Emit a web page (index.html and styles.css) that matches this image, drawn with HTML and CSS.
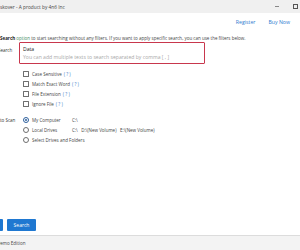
FILE: index.html
```html
<!DOCTYPE html>
<html>
<head>
<meta charset="utf-8">
<link rel="stylesheet" href="styles.css">
</head>
<body>
<div class="app">
  <div class="titlebar">
    <span class="title">skover - A product by 4n6 Inc</span>
    <div class="winctl">
      <span class="min"></span>
      <span class="max"></span>
    </div>
  </div>
  <div class="header">
    <a class="link">Register</a>
    <a class="link">Buy Now</a>
  </div>
  <div class="main">
    <p class="intro"><b>Search</b> <span class="opt">option</span> to start searching without any filters. If you want to apply specific search, you can use the filters below.</p>
    <div class="row search-row">
      <div class="label lbl-search">Search</div>
      <div class="inputbox">
        <div class="value">Data</div>
        <div class="placeholder">You can add multiple texts to search separated by comma [ , ]</div>
      </div>
    </div>
    <div class="options">
      <label class="opt-row"><span class="cb"></span><span>Case Sensitive</span><span class="help">( ? )</span></label>
      <label class="opt-row"><span class="cb"></span><span>Match Exact Word</span><span class="help">( ? )</span></label>
      <label class="opt-row"><span class="cb"></span><span>File Extension</span><span class="help">( ? )</span></label>
      <label class="opt-row"><span class="cb"></span><span>Ignore File</span><span class="help">( ? )</span></label>
    </div>
    <div class="row scan-row">
      <div class="label">to Scan</div>
      <div class="radios">
        <div class="radio-row"><span class="rb checked"></span><span class="rname">My Computer</span><span class="drives">C:\</span></div>
        <div class="radio-row"><span class="rb"></span><span class="rname">Local Drives</span><span class="drives">C:\ &nbsp; D:\(New Volume) &nbsp; E:\(New Volume)</span></div>
        <div class="radio-row"><span class="rb"></span><span class="rname">Select Drives and Folders</span></div>
      </div>
    </div>
  </div>
  <div class="actions">
    <button class="btn btn-back"></button>
    <button class="btn">Search</button>
  </div>
  <div class="footer"><span class="edition">Demo Edition</span></div>
</div>
</body>
</html>
```
FILE: styles.css
```css
html, body {
  margin: 0;
  padding: 0;
  width: 300px;
  height: 250px;
  overflow: hidden;
  background: #ffffff;
}
.app {
  width: 300px;
  height: 250px;
  display: flex;
  flex-direction: column;
  font-family: "Open Sans", "Noto Sans", sans-serif;
  font-size: 4.5px;
  line-height: 6px;
  color: #333333;
}
.titlebar {
  height: 13px;
  background: #f0f0f0;
  display: flex;
  align-items: center;
  justify-content: space-between;
  flex-shrink: 0;
}
.title {
  color: #444444;
  font-size: 4.8px;
}
.winctl {
  display: flex;
  align-items: center;
  gap: 14px;
  margin-right: 2px;
}
.min {
  width: 4px;
  height: 0;
  border-top: 1px solid #888888;
}
.max {
  width: 3px;
  height: 3px;
  border: 1px solid #555555;
}
.header {
  height: 17px;
  display: flex;
  align-items: center;
  justify-content: flex-end;
  gap: 13px;
  padding-right: 10px;
  flex-shrink: 0;
}
.link {
  color: #2f7bd0;
  font-size: 5.2px;
}
.main {
  flex: 1;
  display: flex;
  flex-direction: column;
}
.intro {
  margin: 5px 0 0 0;
  white-space: nowrap;
  color: #444444;
}
.intro b {
  color: #222222;
  font-weight: 700;
}
.opt {
  color: #3f8c62;
}
.row {
  display: flex;
}
.label {
  width: 23px;
  flex-shrink: 0;
  color: #333333;
}
.lbl-search {
  margin-left: -2px;
  padding-top: 5px;
}
.search-row {
  margin-top: 1px;
}
.inputbox {
  width: 177px;
  height: 19px;
  border: 1px solid #c8374d;
  border-radius: 1px;
  padding: 1px 4px 0 3px;
  margin-left: -2px;
  font-size: 5.1px;
}
.value {
  color: #222222;
  line-height: 8px;
  padding-top: 1px;
}
.placeholder {
  color: #a8a8a8;
  line-height: 8px;
}
.options {
  display: flex;
  flex-direction: column;
  padding-left: 23px;
  margin-top: 5px;
}
.opt-row {
  height: 10px;
  display: flex;
  align-items: center;
  color: #444444;
}
.cb {
  width: 4px;
  height: 4px;
  border: 1px solid #6f6f6f;
  border-radius: 0.5px;
  margin-right: 3px;
}
.help {
  color: #3a7ec8;
  margin-left: 2px;
}
.scan-row {
  margin-top: 6px;
}
.scan-row .label {
  line-height: 10px;
}
.radios {
  display: flex;
  flex-direction: column;
}
.radio-row {
  height: 10px;
  display: flex;
  align-items: center;
  color: #444444;
  white-space: nowrap;
}
.rb {
  width: 4px;
  height: 4px;
  border: 1px solid #6f6f6f;
  border-radius: 50%;
  margin-right: 3px;
  position: relative;
  flex-shrink: 0;
}
.rb.checked {
  border-color: #2d5f9c;
}
.rb.checked::after {
  content: "";
  position: absolute;
  left: 1px;
  top: 1px;
  width: 2px;
  height: 2px;
  border-radius: 50%;
  background: #2d5f9c;
}
.rname {
  min-width: 40px;
}
.drives {
  white-space: nowrap;
}
.actions {
  display: flex;
  gap: 4px;
  margin-bottom: 4px;
  flex-shrink: 0;
}
.btn {
  height: 12px;
  width: 29px;
  padding: 0;
  border: 0;
  border-radius: 1px;
  background: #1f78d1;
  color: #ffffff;
  font-family: inherit;
  font-size: 5px;
  line-height: 12px;
  text-align: center;
}
.btn-back {
  margin-left: -26px;
}
.footer {
  height: 15px;
  background: #f3f3f3;
  border-top: 1px solid #dcdcdc;
  box-sizing: border-box;
  display: flex;
  align-items: center;
  flex-shrink: 0;
}
.edition {
  margin-left: -3px;
  color: #444444;
}
```
